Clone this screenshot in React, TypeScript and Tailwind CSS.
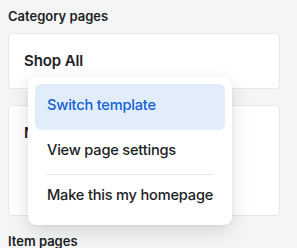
import React from "react";

export default function App() {
  return (
    <div
      className="relative w-[297px] h-[248px] overflow-hidden bg-[#f4f5f7] pl-[8px] pr-[17px] pt-[8px]"
      style={{ fontFamily: "Inter, 'Noto Sans', sans-serif" }}
    >
      <div className="text-[13px] leading-[16px] font-semibold text-[#202223]">Category pages</div>
      <div className="mt-[9px] h-[56px] flex items-center px-[15px] bg-white border border-[#e6e8eb] rounded-[4px]">
        <span className="text-[15px] leading-[20px] font-semibold text-[#202223] tracking-[-0.1px]">Shop All</span>
      </div>
      <div className="mt-[16px] h-[111px] pt-[17px] px-[15px] bg-white border border-[#e6e8eb] rounded-[4px]">
        <div className="text-[15px] leading-[20px] font-semibold text-[#202223] w-[12px] overflow-hidden">N</div>
      </div>
      <div className="mt-[17px] text-[13px] leading-[16px] font-semibold text-[#202223]">Item pages</div>

      <div className="absolute left-[28px] top-[77px] w-[204px] h-[148px] bg-white rounded-[8px] shadow-[0_6px_20px_rgba(0,0,0,0.13),0_1px_3px_rgba(0,0,0,0.06)] p-[7px] flex flex-col">
        <div className="shrink-0 h-[46px] pt-[11px] px-[12px] rounded-[6px] bg-[#e2edfc] text-[14.6px] leading-[20px] font-medium text-[#1262d6] whitespace-nowrap tracking-[-0.2px]">
          Switch template
        </div>
        <div className="shrink-0 h-[40px] pt-[10px] px-[12px] text-[14.6px] leading-[20px] font-medium text-[#202223] whitespace-nowrap tracking-[-0.2px]">
          View page settings
        </div>
        <div className="shrink-0 mt-[4px] mx-[11px] h-px bg-[#e8e9eb]" />
        <div className="shrink-0 pt-[10px] px-[12px] text-[14.6px] leading-[20px] font-medium text-[#202223] whitespace-nowrap tracking-[-0.2px]">
          Make this my homepage
        </div>
      </div>
    </div>
  );
}
